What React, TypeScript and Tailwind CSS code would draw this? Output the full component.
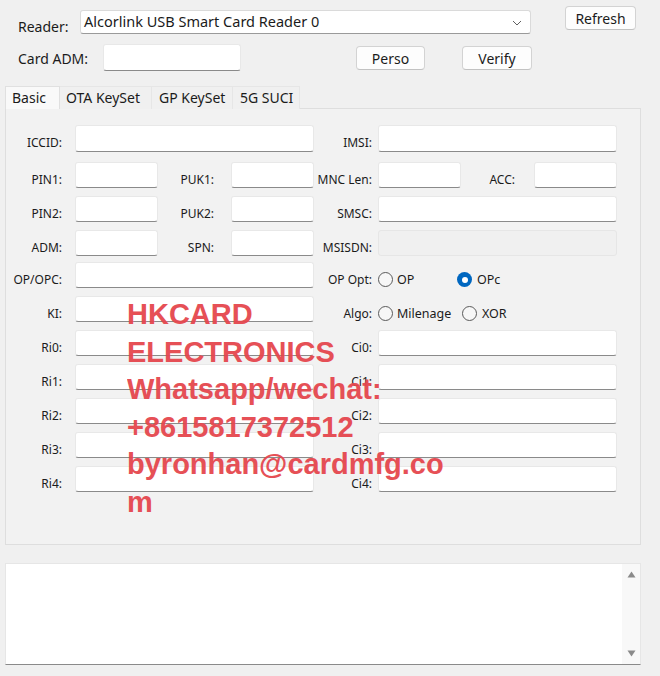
import React from "react";

const font = { fontFamily: '"Noto Sans", "Open Sans", sans-serif' };

function Field({ className = "", disabled = false }: { className?: string; disabled?: boolean }) {
  return (
    <div
      className={
        (disabled
          ? "bg-[#f0f0f0] border border-[#e6e6e6] "
          : "bg-white border border-[#e8e8e8] border-b-[#8a8a8a] ") +
        "rounded-[3px] shrink-0 " +
        className
      }
    />
  );
}

function L({ w, children }: { w: string; children: React.ReactNode }) {
  return (
    <div className={w + " shrink-0 text-right text-[12px] leading-[14px] text-[#1b1b1b] pt-[11px] whitespace-nowrap"}>
      {children}
    </div>
  );
}

function Radio({ checked = false }: { checked?: boolean }) {
  return checked ? (
    <div className="w-[15px] h-[15px] rounded-full bg-[#0067c0] flex items-center justify-center shrink-0">
      <div className="w-[6px] h-[6px] rounded-full bg-white" />
    </div>
  ) : (
    <div className="w-[15px] h-[15px] rounded-full border border-[#5a5a5a] bg-[#f7f7f7] shrink-0" />
  );
}

function Btn({ className, children }: { className: string; children: React.ReactNode }) {
  return (
    <div
      className={
        "h-[24px] bg-[#fdfdfd] border border-[#d3d3d3] border-b-[#c2c2c2] rounded-[4px] flex items-center justify-center text-[14px] text-[#1b1b1b] shrink-0 " +
        className
      }
    >
      {children}
    </div>
  );
}

export default function App() {
  return (
    <div className="relative w-[660px] h-[676px] bg-[#f0f0f0] overflow-hidden text-[#1b1b1b]" style={font}>
      {/* Row 1 */}
      <div className="flex items-start pt-[6px] pl-[18px] h-[34px]">
        <div className="w-[62px] text-[14px] leading-[20px] mt-[11px]">Reader:</div>
        <div className="mt-[4px] w-[451px] h-[24px] bg-white border border-[#dadada] border-b-[#9a9a9a] rounded-[3px] flex items-center pl-[3px] pr-[8px] text-[14.5px]">
          <span className="flex-1 whitespace-nowrap">Alcorlink USB Smart Card Reader 0</span>
          <svg width="10" height="6" viewBox="0 0 10 6" className="mt-[2px]">
            <path d="M1 1 L5 5 L9 1" fill="none" stroke="#606060" strokeWidth="1" />
          </svg>
        </div>
        <Btn className="ml-[34px] w-[71px]">Refresh</Btn>
      </div>

      {/* Row 2 */}
      <div className="flex items-start pt-[10px] pl-[18px] h-[37px]">
        <div className="w-[85px] text-[14px] leading-[20px] mt-[5px]">Card ADM:</div>
        <div className="w-[138px] h-[27px] bg-white border border-[#e8e8e8] border-b-[#8a8a8a] rounded-[3px]" />
        <Btn className="ml-[115px] mt-[2px] w-[69px]">Perso</Btn>
        <Btn className="ml-[37px] mt-[2px] w-[70px]">Verify</Btn>
      </div>

      {/* Tabs */}
      <div className="flex mt-[15px] ml-[5px] h-[23px] text-[14px] leading-[22px]">
        <div className="w-[55px] pl-[6px] bg-[#f9f9f9] border border-b-0 border-[#e0e0e0]">Basic</div>
        <div className="w-[92px] pl-[6px] bg-[#f0f0f0] border-t border-r border-[#e6e6e6]">OTA KeySet</div>
        <div className="w-[81px] pl-[7px] bg-[#f0f0f0] border-t border-r border-[#e6e6e6]">GP KeySet</div>
        <div className="w-[67px] pl-[7px] bg-[#f0f0f0] border-t border-r border-[#e6e6e6]">5G SUCI</div>
      </div>

      {/* Tab panel */}
      <div className="ml-[5px] w-[636px] h-[437px] -mt-[1px] border border-[#dedede] bg-[#f2f2f2] flex flex-col">
        {/* ICCID / IMSI */}
        <div className="flex items-start mt-[16px]">
          <L w="w-[56px]">ICCID:</L>
          <Field className="ml-[13px] w-[239px] h-[27px]" />
          <L w="w-[58px]">IMSI:</L>
          <Field className="ml-[6px] w-[239px] h-[27px]" />
        </div>
        {/* PIN1 row */}
        <div className="flex items-start mt-[10px]">
          <L w="w-[56px]">PIN1:</L>
          <Field className="ml-[13px] w-[83px] h-[26px]" />
          <L w="w-[56px]">PUK1:</L>
          <Field className="ml-[17px] w-[83px] h-[26px]" />
          <L w="w-[58px]">MNC Len:</L>
          <Field className="ml-[6px] w-[83px] h-[26px]" />
          <L w="w-[54px]">ACC:</L>
          <Field className="ml-[19px] w-[83px] h-[26px]" />
        </div>
        {/* PIN2 row */}
        <div className="flex items-start mt-[8px]">
          <L w="w-[56px]">PIN2:</L>
          <Field className="ml-[13px] w-[83px] h-[26px]" />
          <L w="w-[56px]">PUK2:</L>
          <Field className="ml-[17px] w-[83px] h-[26px]" />
          <L w="w-[58px]">SMSC:</L>
          <Field className="ml-[6px] w-[239px] h-[26px]" />
        </div>
        {/* ADM row */}
        <div className="flex items-start mt-[8px]">
          <L w="w-[56px]">ADM:</L>
          <Field className="ml-[13px] w-[83px] h-[26px]" />
          <L w="w-[56px]">SPN:</L>
          <Field className="ml-[17px] w-[83px] h-[26px]" />
          <L w="w-[58px]">MSISDN:</L>
          <Field disabled className="ml-[6px] w-[239px] h-[26px]" />
        </div>
        {/* OP/OPC */}
        <div className="flex items-start mt-[6px]">
          <L w="w-[56px]">OP/OPC:</L>
          <Field className="ml-[13px] w-[239px] h-[26px]" />
          <L w="w-[58px]">OP Opt:</L>
          <div className="ml-[6px] flex items-center pt-[10px] text-[12.5px] leading-[14px]">
            <div className="w-[79px] flex items-center gap-[4px]">
              <Radio />
              <span>OP</span>
            </div>
            <div className="flex items-center gap-[5px]">
              <Radio checked />
              <span>OPc</span>
            </div>
          </div>
        </div>
        {/* KI */}
        <div className="flex items-start mt-[8px]">
          <L w="w-[56px]">KI:</L>
          <Field className="ml-[13px] w-[239px] h-[26px]" />
          <L w="w-[58px]">Algo:</L>
          <div className="ml-[6px] flex items-center pt-[10px] text-[12.5px] leading-[14px]">
            <div className="w-[84px] flex items-center gap-[4px]">
              <Radio />
              <span>Milenage</span>
            </div>
            <div className="flex items-center gap-[5px]">
              <Radio />
              <span>XOR</span>
            </div>
          </div>
        </div>
        {["0", "1", "2", "3", "4"].map((n) => (
          <div key={n} className="flex items-start mt-[8px]">
            <L w="w-[56px]">{"Ri" + n + ":"}</L>
            <Field className="ml-[13px] w-[239px] h-[26px]" />
            <L w="w-[58px]">{"Ci" + n + ":"}</L>
            <Field className="ml-[6px] w-[239px] h-[26px]" />
          </div>
        ))}
      </div>

      {/* Log box */}
      <div className="ml-[5px] mt-[18px] w-[636px] h-[102px] bg-white border border-[#e6e6e6] border-b-[#8a8a8a] flex">
        <div className="flex-1" />
        <div className="w-[18px] bg-[#f8f8f8] flex flex-col items-center justify-between py-[7px]">
          <svg width="9" height="7" viewBox="0 0 9 7">
            <path d="M4.5 0.5 L8.5 6.5 L0.5 6.5 Z" fill="#8a8a8a" />
          </svg>
          <svg width="9" height="7" viewBox="0 0 9 7">
            <path d="M0.5 0.5 L8.5 0.5 L4.5 6.5 Z" fill="#8a8a8a" />
          </svg>
        </div>
      </div>

      {/* Watermark overlay */}
      <div
        className="absolute left-[127px] top-[296px] text-[29px] leading-[37.6px] font-bold text-[#e5474e] opacity-95 pointer-events-none whitespace-nowrap"
        style={{ fontFamily: '"Liberation Sans", Arial, sans-serif' }}
      >
        <div>HKCARD</div>
        <div>ELECTRONICS</div>
        <div>Whatsapp/wechat:</div>
        <div>+8615817372512</div>
        <div>byronhan@cardmfg.co</div>
        <div>m</div>
      </div>
    </div>
  );
}
